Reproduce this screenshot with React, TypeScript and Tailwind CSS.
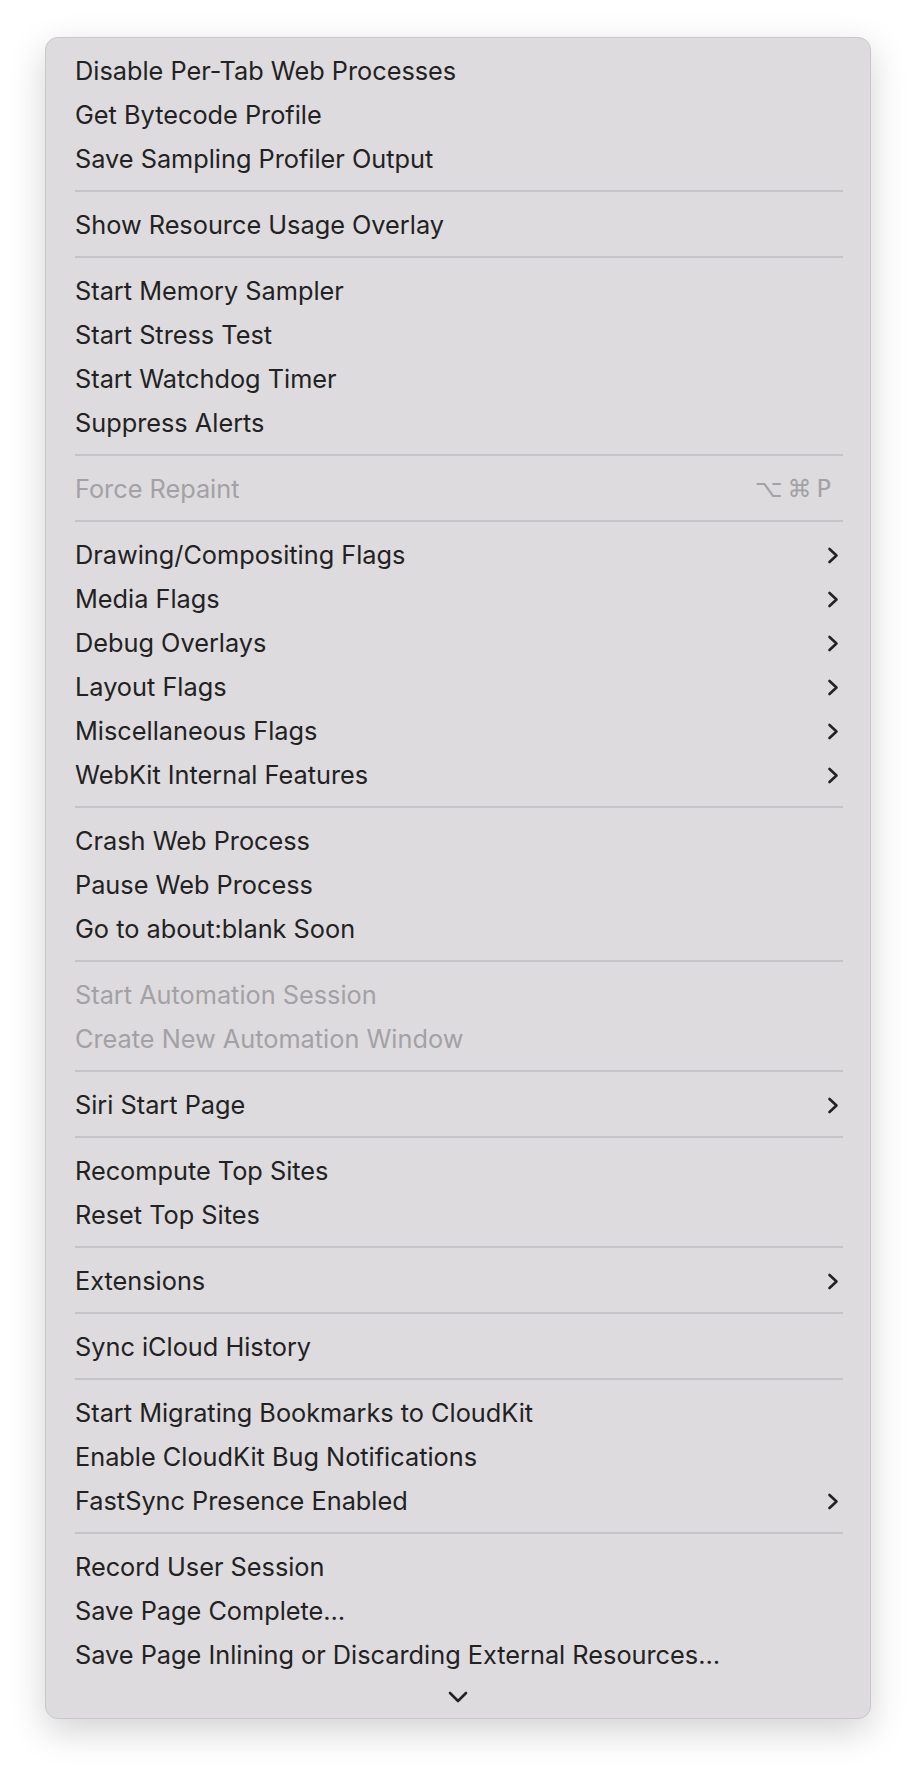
type Item = { label: string; sub?: boolean; disabled?: boolean; shortcut?: string }

const groups: Item[][] = [
  [
    { label: 'Disable Per-Tab Web Processes' },
    { label: 'Get Bytecode Profile' },
    { label: 'Save Sampling Profiler Output' },
  ],
  [{ label: 'Show Resource Usage Overlay' }],
  [
    { label: 'Start Memory Sampler' },
    { label: 'Start Stress Test' },
    { label: 'Start Watchdog Timer' },
    { label: 'Suppress Alerts' },
  ],
  [{ label: 'Force Repaint', disabled: true, shortcut: '⌥⌘P' }],
  [
    { label: 'Drawing/Compositing Flags', sub: true },
    { label: 'Media Flags', sub: true },
    { label: 'Debug Overlays', sub: true },
    { label: 'Layout Flags', sub: true },
    { label: 'Miscellaneous Flags', sub: true },
    { label: 'WebKit Internal Features', sub: true },
  ],
  [
    { label: 'Crash Web Process' },
    { label: 'Pause Web Process' },
    { label: 'Go to about:blank Soon' },
  ],
  [
    { label: 'Start Automation Session', disabled: true },
    { label: 'Create New Automation Window', disabled: true },
  ],
  [{ label: 'Siri Start Page', sub: true }],
  [{ label: 'Recompute Top Sites' }, { label: 'Reset Top Sites' }],
  [{ label: 'Extensions', sub: true }],
  [{ label: 'Sync iCloud History' }],
  [
    { label: 'Start Migrating Bookmarks to CloudKit' },
    { label: 'Enable CloudKit Bug Notifications' },
    { label: 'FastSync Presence Enabled', sub: true },
  ],
  [
    { label: 'Record User Session' },
    { label: 'Save Page Complete…' },
    { label: 'Save Page Inlining or Discarding External Resources…' },
  ],
]

function ChevronRight() {
  return (
    <svg width="12" height="17" viewBox="0 0 12 17" fill="none">
      <path d="M2.5 2l7 6.5-7 6.5" stroke="#232323" strokeWidth="2.6" strokeLinecap="round" strokeLinejoin="round" />
    </svg>
  )
}

function MenuRow({ item }: { item: Item }) {
  return (
    <div className="h-[44px] flex items-center justify-between pl-[29px] pr-[31px] pt-[2px]">
      <span className={item.disabled ? 'text-[#a3a1a5]' : 'text-[#222222]'}>{item.label}</span>
      {item.shortcut && (
        <span className="text-[#a3a1a5] tracking-[5px] font-['DejaVu_Sans',sans-serif] text-[24px] mr-[3px]">
          {item.shortcut}
        </span>
      )}
      {item.sub && <ChevronRight />}
    </div>
  )
}

export default function App() {
  return (
    <div className="w-[916px] h-[1772px] bg-white pt-[37px]">
      <div className="mx-auto w-[826px] h-[1682px] rounded-[13px] border border-[#c9c7ca] bg-[#dddbde] shadow-[0_12px_36px_rgba(0,0,0,0.18)] pt-[10px] font-['Inter',sans-serif] text-[25.3px] leading-none flex flex-col">
        {groups.map((group, gi) => (
          <div key={gi}>
            {gi > 0 && (
              <div className="h-[22px] flex items-center pl-[29px] pr-[27px]">
                <div className="h-[2px] w-full bg-[#c5c3c7]" />
              </div>
            )}
            {group.map((item) => (
              <MenuRow key={item.label} item={item} />
            ))}
          </div>
        ))}
        <div className="flex-1 flex items-center justify-center">
          <svg width="20" height="12" viewBox="0 0 20 12" fill="none">
            <path d="M2 2l8 8 8-8" stroke="#232323" strokeWidth="2.6" strokeLinecap="round" strokeLinejoin="round" />
          </svg>
        </div>
      </div>
    </div>
  )
}
